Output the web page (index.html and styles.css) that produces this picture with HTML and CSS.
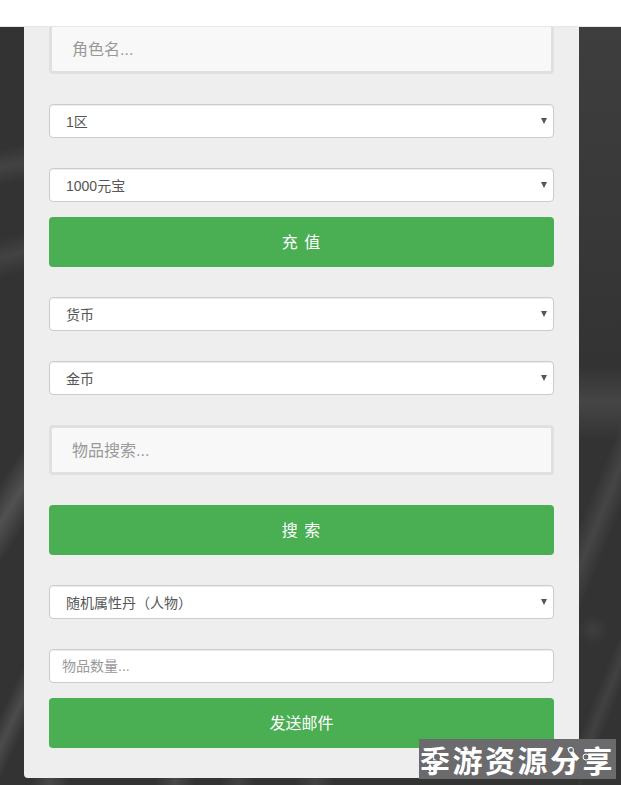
FILE: index.html
```html
<!DOCTYPE html>
<html lang="zh-CN">
<head>
<meta charset="utf-8">
<title>充值</title>
<link rel="stylesheet" href="styles.css">
</head>
<body>
<header class="topbar"></header>
<main class="card">
  <input class="field-lg" placeholder="角色名...">
  <div class="select-wrap gap-30"><select class="select"><option>1区</option></select><span class="caret"></span></div>
  <div class="select-wrap gap-30"><select class="select"><option>1000元宝</option></select><span class="caret"></span></div>
  <button class="btn gap-15 spaced">充 值</button>
  <div class="select-wrap gap-30"><select class="select"><option>货币</option></select><span class="caret"></span></div>
  <div class="select-wrap gap-30"><select class="select"><option>金币</option></select><span class="caret"></span></div>
  <input class="field-lg gap-30" placeholder="物品搜索...">
  <button class="btn gap-30 spaced">搜 索</button>
  <div class="select-wrap gap-30"><select class="select"><option>随机属性丹（人物）</option></select><span class="caret"></span></div>
  <input class="field-sm gap-30" placeholder="物品数量...">
  <button class="btn gap-15">发送邮件</button>
</main>
<div class="watermark">季游资源分享
  <svg class="sparkles" width="197" height="40" viewBox="0 0 197 40" aria-hidden="true">
    <path d="M11 24l1.500 3.500 3.500 1.500-3.500 1.500-1.500 3.500-1.500-3.500-3.500-1.500 3.500-1.500z" fill="#fff"/>
    <circle cx="18" cy="18" r="3" fill="#6b6a6c"/>
    <path d="M152 23l1.200 2.800 2.800 1.200-2.800 1.200-1.200 2.800-1.200-2.800-2.800-1.200 2.800-1.200z" fill="#fff"/>
    <circle cx="152" cy="11" r="2.500" fill="#6b6a6c" stroke="#fff"/>
    <circle cx="167" cy="18" r="3" fill="#6b6a6c" stroke="#fff"/>
  </svg>
</div>
</body>
</html>
```
FILE: styles.css
```css
* { box-sizing: border-box; }
html, body { margin: 0; height: 785px; overflow: hidden; }
body {
  position: relative;
  padding: 0 42px 0 24px;
  font-family: "Liberation Sans", "Noto Sans CJK SC", sans-serif;
  background-color: #333;
  background-repeat: no-repeat;
  background-image:
    linear-gradient(170deg, transparent 25%, rgba(255,255,255,.08) 50%, transparent 75%),
    linear-gradient(165deg, transparent 20%, rgba(255,255,255,.08) 50%, transparent 80%),
    linear-gradient(122deg, transparent 33%, rgba(255,255,255,.15) 50%, transparent 67%),
    linear-gradient(115deg, transparent 36%, rgba(255,255,255,.12) 50%, transparent 64%),
    linear-gradient(180deg, transparent, rgba(255,255,255,.09) 50%, transparent),
    linear-gradient(112deg, transparent 37%, rgba(255,255,255,.09) 50%, transparent 63%),
    radial-gradient(closest-side, rgba(255,255,255,.06), transparent),
    linear-gradient(112deg, transparent 38%, rgba(255,255,255,.07) 50%, transparent 62%),
    linear-gradient(90deg, transparent, rgba(255,255,255,.1), transparent),
    linear-gradient(90deg, transparent, rgba(255,255,255,.1), transparent),
    linear-gradient(90deg, transparent, rgba(255,255,255,.07), transparent),
    linear-gradient(90deg, transparent, rgba(255,255,255,.08), transparent),
    linear-gradient(180deg, #3e3e3e, #383838 60%, #333);
  background-position:
    0 130px,
    0 225px,
    0 405px,
    0 632px,
    579px 365px,
    579px 397px,
    578px 615px,
    579px 640px,
    30px 778px,
    155px 778px,
    220px 778px,
    295px 778px,
    579px 27px;
  background-size:
    24px 70px,
    24px 60px,
    24px 200px,
    24px 180px,
    42px 75px,
    42px 240px,
    30px 30px,
    42px 145px,
    40px 7px,
    40px 7px,
    36px 7px,
    40px 7px,
    42px 340px;
}
.topbar {
  position: absolute;
  top: 0; left: 0; right: 0;
  height: 27px;
  background: #fff;
  border-bottom: 1px solid #e7e7e7;
  z-index: 2;
}
.card {
  display: flex;
  flex-direction: column;
  height: 778px;
  padding: 24px 25px 30px;
  background: #eee;
  border-radius: 0 0 4px 4px;
}
.gap-30 { margin-top: 30px; }
.gap-15 { margin-top: 15px; }
.field-lg {
  display: block;
  width: 100%;
  height: 50px;
  padding: 2px 20px 0;
  background: #f8f8f8;
  border: 3px solid #e0e0e0;
  border-radius: 4px;
  font: 16px "Liberation Sans", "Noto Sans CJK SC", sans-serif;
  color: #555;
}
.field-sm {
  display: block;
  width: 100%;
  height: 34px;
  padding: 0 12px;
  background: #fff;
  border: 1px solid #ccc;
  border-radius: 4px;
  box-shadow: inset 0 1px 1px rgba(0,0,0,.075);
  font: 14px "Liberation Sans", "Noto Sans CJK SC", sans-serif;
  color: #555;
}
input::placeholder { color: #999; opacity: 1; }
.select-wrap { position: relative; height: 34px; }
.select {
  display: block;
  width: 100%;
  height: 34px;
  padding: 2px 16px 0;
  appearance: none;
  background: #fff;
  border: 1px solid #ccc;
  border-radius: 4px;
  box-shadow: inset 0 1px 1px rgba(0,0,0,.075);
  font: 14px "Liberation Sans", "Noto Sans CJK SC", sans-serif;
  color: #555;
}
.caret {
  position: absolute;
  top: 14px; right: 7px;
  width: 0; height: 0;
  border-left: 3px solid transparent;
  border-right: 3px solid transparent;
  border-top: 6px solid #555;
}
.btn {
  display: block;
  width: 100%;
  height: 50px;
  padding: 0 0 2px;
  background: #4aae52;
  border: 0;
  border-radius: 4px;
  color: #fff;
  font: 16px "Liberation Sans", "Noto Sans CJK SC", sans-serif;
}
.spaced { letter-spacing: 1px; }
.watermark {
  position: absolute;
  left: 419px; top: 739px;
  width: 197px; height: 40px;
  background: #6b6a6c;
  color: #fff;
  font: 700 30px/40px "Noto Sans CJK SC", sans-serif;
  letter-spacing: 2.5px;
  text-align: center;
  white-space: nowrap;
  z-index: 3;
}
.sparkles { position: absolute; left: 0; top: 0; }
```
